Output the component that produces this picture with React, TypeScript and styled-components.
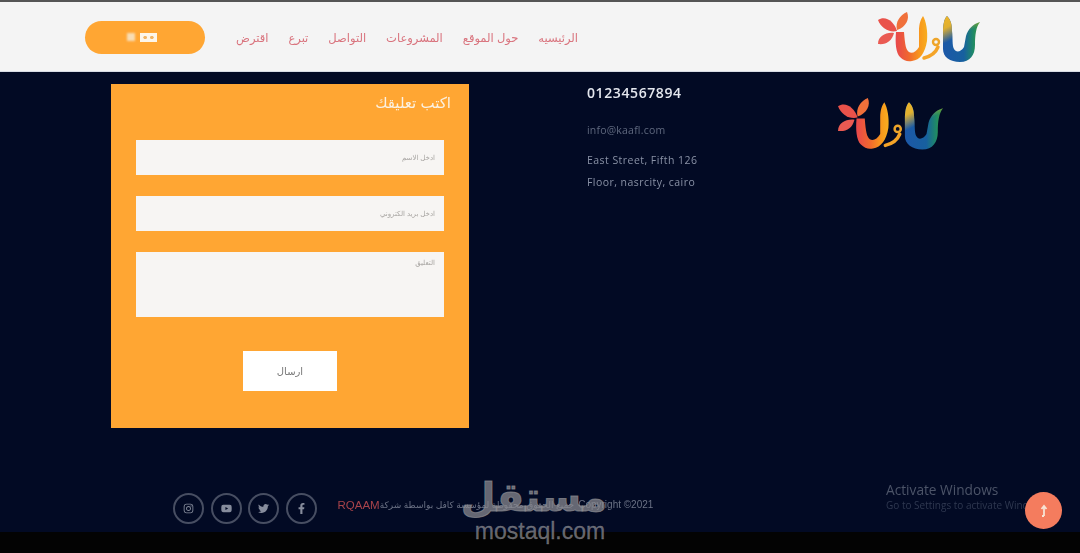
import React from "react";
import styled, { createGlobalStyle } from "styled-components";
import { FaFacebookF, FaInstagram, FaTwitter, FaYoutube } from "react-icons/fa";

const GlobalStyle = createGlobalStyle`
  html, body {
    margin: 0;
    padding: 0;
    background: #000;
    font-family: "Liberation Sans", "DejaVu Sans", sans-serif;
  }
`;

const navLinks = ["الرئيسيه", "حول الموقع", "المشروعات", "التواصل", "تبرع", "اقترض"];
const socials = [FaInstagram, FaYoutube, FaTwitter, FaFacebookF];

function Logo({ id, width }: { id: string; width: number }) {
  return (
    <svg width={width} viewBox="0 0 103 52" style={{ display: "block" }}>
      <defs>
        <linearGradient id={`${id}-warm`} x1="18" y1="0" x2="50" y2="0" gradientUnits="userSpaceOnUse">
          <stop offset="0" stopColor="#e8484c" />
          <stop offset="0.4" stopColor="#f0672f" />
          <stop offset="0.75" stopColor="#f8991c" />
          <stop offset="1" stopColor="#f8b020" />
        </linearGradient>
        <linearGradient id={`${id}-cool`} x1="65" y1="0" x2="103" y2="0" gradientUnits="userSpaceOnUse">
          <stop offset="0" stopColor="#1c58a8" />
          <stop offset="0.55" stopColor="#17609f" />
          <stop offset="0.8" stopColor="#1f8a66" />
          <stop offset="1" stopColor="#4a9c35" />
        </linearGradient>
        <linearGradient id={`${id}-top`} x1="65" y1="5" x2="80" y2="35" gradientUnits="userSpaceOnUse">
          <stop offset="0" stopColor="#eeb528" />
          <stop offset="0.35" stopColor="#e0b030" />
          <stop offset="0.75" stopColor="#e0b030" stopOpacity="0" />
        </linearGradient>
      </defs>
      <path d="M19 19C17 11 22 4 29 1C32 8 28 16 19 19Z" fill="#f0703a" />
      <path d="M0 9C7 4 16 10 19 20C11 22 3 17 0 9Z" fill="#e9524a" />
      <path d="M0 33C0 25 8 21 16 22C14 30 8 34 0 33Z" fill="#ea5a52" />
      <path
        d="M18 21C17 32 18 42 22 46C26 50 30 51 34 50C42 49 47 42 49 30C50 20 48 10 45 5C43 8 41 12 41 20L41 36C38 41 34 43 31 41C28 39 27 34 26 21Z"
        fill={`url(#${id}-warm)`}
      />
      <circle cx="58" cy="31" r="3" fill="none" stroke="#eea52a" strokeWidth="2.4" />
      <path d="M60 36C58 41 54 45 46 47" fill="none" stroke="#f4a428" strokeWidth="3.4" strokeLinecap="round" />
      <path
        d="M69 5C66 8 65 14 65 22L65 38C65 46 72 51 82 51C92 51 97 44 97 34C97 24 98 16 102 11C95 13 90 18 88 25L86 36C83 41 78 42 76 38C74 34 75 28 74 20C74 12 72 8 69 5Z"
        fill={`url(#${id}-cool)`}
      />
      <path
        d="M69 5C66 8 65 14 65 22L65 38C65 46 72 51 82 51C92 51 97 44 97 34C97 24 98 16 102 11C95 13 90 18 88 25L86 36C83 41 78 42 76 38C74 34 75 28 74 20C74 12 72 8 69 5Z"
        fill={`url(#${id}-top)`}
      />
    </svg>
  );
}

export default function App() {
  return (
    <>
      <GlobalStyle />
      <Page>
        <TopEdge />
        <NavBar>
          <NavButton>
            <ButtonDot />
            <ButtonMark />
          </NavButton>
          <NavLinks>
            {navLinks.map((link) => (
              <NavLink key={link}>{link}</NavLink>
            ))}
          </NavLinks>
          <NavLogo>
            <Logo id="nav-logo" width={103} />
          </NavLogo>
        </NavBar>

        <Main>
          <FormCard>
            <FormTitle>اكتب تعليقك</FormTitle>
            <Field>
              <FieldHint>ادخل الاسم</FieldHint>
            </Field>
            <Field>
              <FieldHint>ادخل بريد الكتروني</FieldHint>
            </Field>
            <TextArea>
              <FieldHint>التعليق</FieldHint>
            </TextArea>
            <SendButton>ارسال</SendButton>
          </FormCard>

          <Contact>
            <Phone>01234567894</Phone>
            <Email>info@kaafl.com</Email>
            <Address>
              East Street, Fifth 126
              <br />
              Floor, nasrcity, cairo
            </Address>
          </Contact>

          <FooterLogo>
            <Logo id="footer-logo" width={106} />
          </FooterLogo>
        </Main>

        <Footer>
          <Socials>
            {socials.map((Icon, i) => (
              <SocialCircle key={i}>
                <Icon size={11} />
              </SocialCircle>
            ))}
          </Socials>
          <Copyright>
            <Brand>RQAAM</Brand>
            <CopyrightArabic>جميع الحقوق محفوظة لمؤسسة كافل بواسطة شركة</CopyrightArabic>
            <span>Copyright ©2021</span>
          </Copyright>
        </Footer>
        <Letterbox />

        <Activate>
          <ActivateTitle>Activate Windows</ActivateTitle>
          <ActivateSub>Go to Settings to activate Windows.</ActivateSub>
        </Activate>
        <ScrollTop>
          <svg width="12" height="14" viewBox="0 0 12 14" fill="none" stroke="#f7e3d4" strokeWidth="1.8">
            <path d="M6 2V12M6 12H4M3.5 5L6 2L8.5 5" />
          </svg>
        </ScrollTop>
        <Watermark>
          <WatermarkArabic>مستقل</WatermarkArabic>
          <WatermarkLatin>mostaql.com</WatermarkLatin>
        </Watermark>
      </Page>
    </>
  );
}

const Page = styled.div`
  position: relative;
  width: 1080px;
  height: 553px;
  overflow: hidden;
  display: flex;
  flex-direction: column;
  background: #020a24;
`;

const TopEdge = styled.div`
  height: 2px;
  background: #555;
`;

const NavBar = styled.header`
  height: 70px;
  flex-shrink: 0;
  box-sizing: border-box;
  padding: 0 99px 0 85px;
  display: flex;
  align-items: center;
  background: #f4f4f4;
  border-bottom: 1px solid #d8dce4;
`;

const NavButton = styled.div`
  width: 120px;
  height: 33px;
  margin-top: 1px;
  padding-right: 6px;
  box-sizing: border-box;
  border-radius: 17px;
  background: #ffa633;
  display: flex;
  align-items: center;
  justify-content: center;
  gap: 5px;
`;

const ButtonDot = styled.span`
  width: 8px;
  height: 8px;
  background: #f8dcb4;
  filter: blur(0.8px);
`;

const ButtonMark = styled.span`
  width: 17px;
  height: 9px;
  background:
    radial-gradient(circle at 30% 50%, #f2b566 0 1.5px, transparent 2px),
    radial-gradient(circle at 70% 50%, #f2b566 0 1.5px, transparent 2px),
    #fdf6ea;
  filter: blur(0.6px);
`;

const NavLinks = styled.nav`
  margin-left: 31px;
  display: flex;
  gap: 20px;
  direction: rtl;
`;

const NavLink = styled.a`
  margin-top: 2px;
  font-size: 11.5px;
  color: #d9737d;
  white-space: nowrap;
  filter: blur(0.6px);
`;

const NavLogo = styled.div`
  margin-left: auto;
  filter: blur(0.5px);
`;

const Main = styled.main`
  height: 387px;
  flex-shrink: 0;
  box-sizing: border-box;
  padding: 12px 0 0 111px;
  display: flex;
  align-items: flex-start;
  background: #020a24;
`;

const FormCard = styled.section`
  width: 358px;
  height: 344px;
  box-sizing: border-box;
  padding: 0 25px;
  flex-shrink: 0;
  display: flex;
  flex-direction: column;
  background: #ffa633;
`;

const FormTitle = styled.h3`
  margin: 9px -7px 0 0;
  height: 47px;
  font-size: 15px;
  font-weight: 400;
  line-height: 20px;
  text-align: right;
  direction: rtl;
  color: #fbf1e2;
  filter: blur(0.6px);
`;

const Field = styled.div`
  height: 35px;
  margin-bottom: 21px;
  box-sizing: border-box;
  padding: 0 9px;
  display: flex;
  align-items: center;
  justify-content: flex-end;
  background: #f7f5f3;
`;

const TextArea = styled(Field)`
  height: 65px;
  margin-bottom: 34px;
  padding-top: 7px;
  align-items: flex-start;
`;

const FieldHint = styled.span`
  font-size: 7px;
  direction: rtl;
  color: #a8a5a2;
  filter: blur(0.6px);
`;

const SendButton = styled.div`
  width: 94px;
  height: 40px;
  align-self: center;
  display: flex;
  align-items: center;
  justify-content: center;
  font-size: 10px;
  color: #777;
  background: #fff;
  filter: blur(0.4px);
`;

const Contact = styled.section`
  margin-left: 118px;
  width: 210px;
  flex-shrink: 0;
  font-family: "Open Sans", sans-serif;
`;

const Phone = styled.div`
  font-size: 14px;
  font-weight: 600;
  line-height: 18px;
  color: #e4e7ee;
  letter-spacing: 0.6px;
  filter: blur(0.5px);
`;

const Email = styled.div`
  margin-top: 21px;
  font-size: 10.5px;
  line-height: 14px;
  letter-spacing: 0.2px;
  color: #5f687e;
  filter: blur(0.6px);
`;

const Address = styled.div`
  margin-top: 12px;
  font-size: 10.5px;
  line-height: 22px;
  letter-spacing: 0.45px;
  color: #8a92a6;
  filter: blur(0.6px);
`;

const FooterLogo = styled.div`
  margin: 13px 0 0 41px;
  filter: blur(0.6px);
`;

const Footer = styled.footer`
  height: 73px;
  flex-shrink: 0;
  box-sizing: border-box;
  padding: 34px 0 0 173px;
  display: flex;
  align-items: flex-start;
  gap: 21px;
  background: #020a24;
`;

const Socials = styled.div`
  display: flex;
  gap: 6.5px;
`;

const SocialCircle = styled.span`
  width: 27px;
  height: 27px;
  border: 2px solid #474e62;
  border-radius: 50%;
  display: flex;
  align-items: center;
  justify-content: center;
  color: #868c9c;
  filter: blur(0.5px);
`;

const Copyright = styled.div`
  margin-top: 6px;
  display: flex;
  gap: 4px;
  font-size: 10px;
  line-height: 12px;
  white-space: nowrap;
  color: #6b7285;
  filter: blur(0.6px);
`;

const Brand = styled.span`
  margin-right: -4px;
  font-size: 11.5px;
  color: #a8434a;
`;

const CopyrightArabic = styled.span`
  font-size: 9px;
  direction: rtl;
`;

const Letterbox = styled.div`
  flex: 1;
  background: #030303;
`;

const Activate = styled.div`
  position: absolute;
  left: 886px;
  top: 481px;
  white-space: nowrap;
  font-family: "Open Sans", sans-serif;
  filter: blur(0.6px);
`;

const ActivateTitle = styled.div`
  font-size: 13.7px;
  line-height: 17px;
  color: #4c5468;
`;

const ActivateSub = styled.div`
  font-size: 10px;
  line-height: 14px;
  color: #2f3850;
`;

const ScrollTop = styled.div`
  position: absolute;
  left: 1025px;
  top: 492px;
  width: 37px;
  height: 37px;
  border-radius: 50%;
  display: flex;
  align-items: center;
  justify-content: center;
  background: #f47c5e;
`;

const Watermark = styled.div`
  position: absolute;
  left: 440px;
  top: 474px;
  width: 200px;
  display: flex;
  flex-direction: column;
  align-items: center;
  color: rgba(140, 140, 146, 0.72);
`;

const WatermarkArabic = styled.div`
  margin-right: 12px;
  font-size: 40px;
  font-weight: 700;
  line-height: 46px;
  direction: rtl;
  -webkit-text-stroke: 1px rgba(140, 140, 146, 0.72);
`;

const WatermarkLatin = styled.div`
  font-size: 23px;
  line-height: 22px;
  -webkit-text-stroke: 0.3px rgba(140, 140, 146, 0.72);
`;
